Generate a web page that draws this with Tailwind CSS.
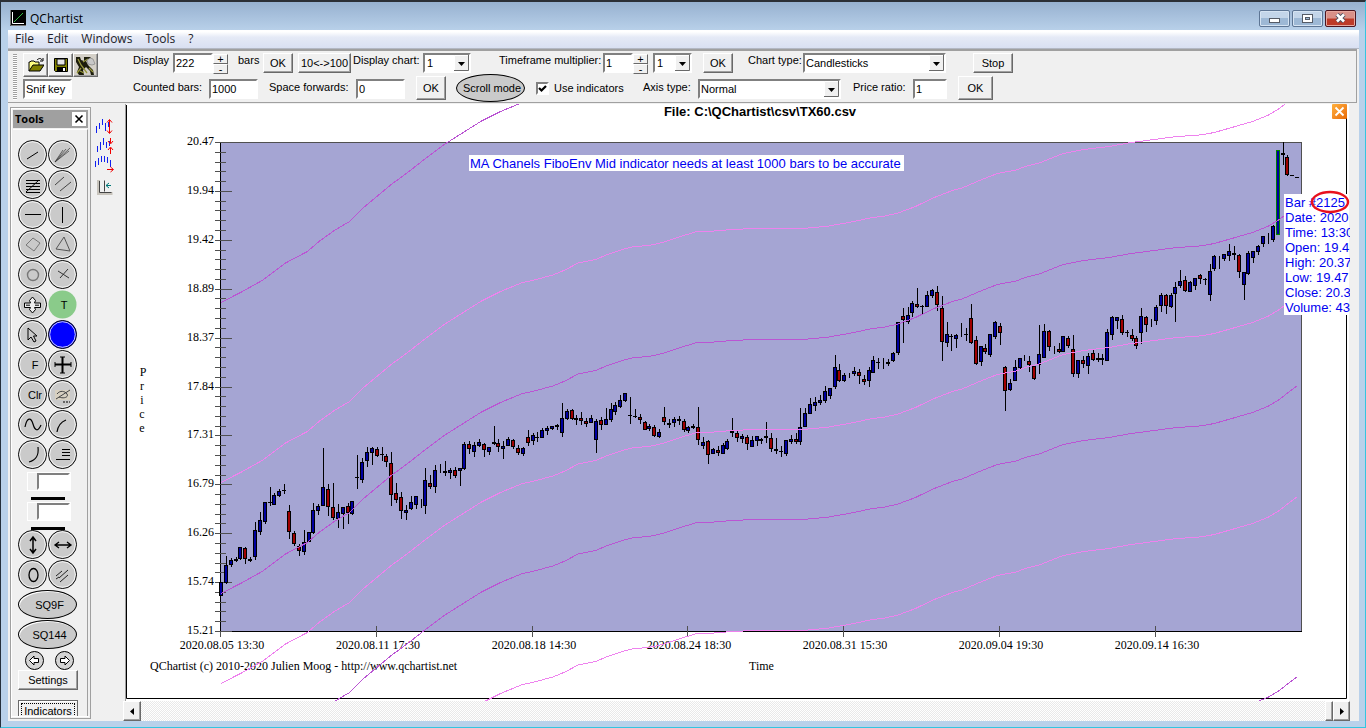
<!DOCTYPE html>
<html lang="en">
<head>
<meta charset="utf-8">
<title>QChartist</title>
<script src="https://cdn.jsdelivr.net/npm/@tailwindcss/browser@4"></script>
</head>
<body class="bg-[#b9d1ea] font-['Liberation_Sans',Arial,sans-serif] text-[11px] leading-[14px] text-black">
<div class="flex h-screen flex-col overflow-hidden border-x border-t-2 border-b border-t-[#2b2f36] border-r-[#35c5e0] border-b-[#35c5e0] border-l-[#25303c] bg-[#b9d1ea]">

  <header class="flex h-7 shrink-0 items-center bg-linear-to-b from-[#97b1d0] to-[#b8d0e9] pr-[9px] pl-[9px]">
    <svg class="mt-1 size-4" viewBox="0 0 16 16"><rect width="16" height="16" fill="#000"/><path d="M.5 0v15.500H16" stroke="#777" fill="none"/><path d="M2.500 2v11.500H14" stroke="#fff" fill="none"/><path d="M4 12 13 3" stroke="#3b4" fill="none"/></svg>
    <h1 class="mt-[6px] ml-1 font-['Open_Sans','Noto_Sans',sans-serif] text-xs">QChartist</h1>
    <div class="ml-auto flex gap-[2px] pt-1">
      <button aria-label="Minimize" class="flex h-[17px] w-[31px] items-center justify-center rounded-[2px] border border-[#5d7594] bg-linear-to-b from-[#c3d5e9] from-50% to-[#9db8d5] to-50% shadow-[inset_0_0_0_1px_#d5e3f2]"><svg class="mt-1 h-[5px] w-[11px]"><rect x=".5" y=".5" width="10" height="4" fill="#fff" stroke="#555b66"/></svg></button>
      <button aria-label="Restore" class="flex h-[17px] w-[31px] items-center justify-center rounded-[2px] border border-[#5d7594] bg-linear-to-b from-[#c3d5e9] from-50% to-[#9db8d5] to-50% shadow-[inset_0_0_0_1px_#d5e3f2]"><svg class="h-[9px] w-[11px]"><rect x=".5" y=".5" width="10" height="8" fill="#fff" stroke="#555b66"/><rect x="3.500" y="3.500" width="4" height="2" fill="#9db8d5" stroke="#555b66"/></svg></button>
      <button aria-label="Close" class="flex h-[17px] w-[31px] items-center justify-center rounded-[2px] border border-[#4c1520] bg-linear-to-b from-[#d99088] from-45% to-[#bd3a28] to-55% shadow-[inset_0_0_0_1px_#e6a79e]"><svg class="h-[10px] w-[13px]" viewBox="0 0 13 10"><path d="m3 1.500 7 7m0-7-7 7" stroke="#4a5060" stroke-width="4.500"/><path d="m3 1.500 7 7m0-7-7 7" stroke="#fff" stroke-width="2.600"/></svg></button>
    </div>
  </header>

  <div class="mr-[6px] mb-[6px] ml-[7px] flex min-h-0 flex-1 flex-col bg-[#f0f0f0]">
    <nav class="flex h-[19px] shrink-0 items-center gap-[13px] border-b border-[#b3b8c4] bg-linear-to-b from-white from-10% via-[#e5eaf6] via-40% to-[#d9e0f2] pl-[7px] font-['Open_Sans','Noto_Sans',sans-serif] text-xs text-[#1c1c28]">
      <a href="#file">File</a><a href="#edit">Edit</a><a href="#windows">Windows</a><a href="#tools">Tools</a><a href="#help">?</a>
    </nav>

    <div class="mr-[2px] flex h-[54px] shrink-0 border-t-2 border-r border-b border-t-[#a0a0a0] border-r-[#a0a0a0] border-b-[#a0a0a0]">
      <div class="mt-[3px] ml-[5px] h-[46px] w-1 bg-[repeating-linear-gradient(to_bottom,#a0a0a0_0_1px,#fff_1px_2px)]"></div>
      <div class="ml-[6px] flex w-[110px] flex-col pt-[2px]">
        <div class="flex h-6">
          <button aria-label="Open" class="flex h-6 w-[25px] items-center justify-center border border-t-white border-r-[#696969] border-b-[#696969] border-l-white shadow-[inset_-1px_-1px_#a0a0a0]"><svg class="size-4" viewBox="0 0 16 16"><path d="M1 14V5h1l1-1h3l1 1h4v3" fill="#ffff80" stroke="#000"/><path d="M1 14 5 8h11l-4 6z" fill="#808000" stroke="#000"/><path d="M9 3c2-2 4-2 5 0m1-2v3h-3" fill="none" stroke="#000"/></svg></button>
          <button aria-label="Save" class="flex h-6 w-[25px] items-center justify-center border border-t-white border-r-[#696969] border-b-[#696969] border-l-white shadow-[inset_-1px_-1px_#a0a0a0]"><svg class="size-4" viewBox="0 0 16 16"><path d="M1.500 1.500h13v13h-12l-1-1z" fill="#808000" stroke="#000"/><path d="M4 2h8v6H4z" fill="#e4e4e4" stroke="#000"/><path d="M4 10h9v5H4z" fill="#000"/><path d="M10 11h2v3h-2z" fill="#fff"/></svg></button>
          <button aria-label="Configure" class="flex h-6 w-[25px] items-center justify-center border border-t-white border-r-[#696969] border-b-[#696969] border-l-white bg-[#d4d0c8] shadow-[inset_-1px_-1px_#a0a0a0]"><svg class="h-[19px] w-[21px]" viewBox="0 0 21 19"><path d="M1 1h4l1 3 3 1V1h7l-3 3-2 1 2 4 5 5 1 5h-3l-1-4-4-4-3 3 1 5H4l-2-3 2-5-3-5z" fill="#1c1c0c"/><path d="m3 3 3 6 6 8M2 17l4-5m2-6 5-3m1 9 4 4M5 15l4 2" stroke="#98983c" stroke-width="1.300" fill="none"/><path d="m12 4 3-2 3 1 2 5-3 1-4-1z" fill="#c8c8c8" stroke="#777" stroke-width=".6"/></svg></button>
        </div>
        <input aria-label="Snif key" value="Snif key" class="mt-[2px] h-5 w-[49px] border-2 border-t-[#808080] border-r-white border-b-white border-l-[#808080] bg-white px-px text-[11px]">
      </div>

      <div class="flex flex-col pt-[2px]">
        <div class="flex h-[21px]">
          <label for="nbars" class="w-10">Display</label>
          <input id="nbars" value="222" class="h-5 w-10 border-2 border-t-[#808080] border-r-white border-b-white border-l-[#808080] bg-white px-px text-[11px]">
          <div class="mt-px flex w-[15px] flex-col"><button class="flex h-[10px] items-center justify-center border border-t-white border-r-[#696969] border-b-[#696969] border-l-white bg-[#f0f0f0] text-[11px]">+</button><button class="flex h-[10px] items-center justify-center border border-t-white border-r-[#696969] border-b-[#696969] border-l-white bg-[#f0f0f0] text-[11px]">-</button></div>
          <span class="ml-[10px] w-[25px]">bars</span>
          <button class="h-5 w-[30px] border border-t-white border-r-[#696969] border-b-[#696969] border-l-white shadow-[inset_-1px_-1px_#a0a0a0]">OK</button>
          <button class="ml-[5px] h-5 w-[53px] border border-t-white border-r-[#696969] border-b-[#696969] border-l-white whitespace-nowrap shadow-[inset_-1px_-1px_#a0a0a0]">10&lt;-&gt;100</button>
          <label for="dchart" class="ml-[2px] w-[70px] whitespace-nowrap">Display chart:</label>
          <div class="relative h-5 w-12"><select id="dchart" class="h-5 w-full appearance-none border-2 border-t-[#808080] border-r-white border-b-white border-l-[#808080] bg-white px-[2px]"><option>1</option></select><svg class="pointer-events-none absolute top-[2px] right-[2px] h-4 w-[15px]"><path d="M0 0h15v16H0z" fill="#f0f0f0"/><path d="M.5 15V.5H14" stroke="#fff" fill="none"/><path d="M14.500 0v15.500H0" stroke="#696969" fill="none"/><path d="M4 7h7l-3.500 4z"/></svg></div>
          <label for="tfm" class="ml-[28px] w-[104px] whitespace-nowrap">Timeframe multiplier:</label>
          <input id="tfm" value="1" class="h-5 w-[30px] border-2 border-t-[#808080] border-r-white border-b-white border-l-[#808080] bg-white px-px text-[11px]">
          <div class="mt-px flex w-[15px] flex-col"><button class="flex h-[10px] items-center justify-center border border-t-white border-r-[#696969] border-b-[#696969] border-l-white bg-[#f0f0f0] text-[11px]">+</button><button class="flex h-[10px] items-center justify-center border border-t-white border-r-[#696969] border-b-[#696969] border-l-white bg-[#f0f0f0] text-[11px]">-</button></div>
          <div class="relative ml-[5px] h-5 w-[39px]"><select aria-label="Timeframe" class="h-5 w-full appearance-none border-2 border-t-[#808080] border-r-white border-b-white border-l-[#808080] bg-white px-[2px]"><option>1</option></select><svg class="pointer-events-none absolute top-[2px] right-[2px] h-4 w-[15px]"><path d="M0 0h15v16H0z" fill="#f0f0f0"/><path d="M.5 15V.5H14" stroke="#fff" fill="none"/><path d="M14.500 0v15.500H0" stroke="#696969" fill="none"/><path d="M4 7h7l-3.500 4z"/></svg></div>
          <button class="ml-[11px] h-5 w-[30px] border border-t-white border-r-[#696969] border-b-[#696969] border-l-white shadow-[inset_-1px_-1px_#a0a0a0]">OK</button>
          <label for="ctype" class="ml-[15px] w-[55px] whitespace-nowrap">Chart type:</label>
          <div class="relative h-5 w-[143px]"><select id="ctype" class="h-5 w-full appearance-none border-2 border-t-[#808080] border-r-white border-b-white border-l-[#808080] bg-white px-px"><option>Candlesticks</option></select><svg class="pointer-events-none absolute top-[2px] right-[2px] h-4 w-[15px]"><path d="M0 0h15v16H0z" fill="#f0f0f0"/><path d="M.5 15V.5H14" stroke="#fff" fill="none"/><path d="M14.500 0v15.500H0" stroke="#696969" fill="none"/><path d="M4 7h7l-3.500 4z"/></svg></div>
          <button class="ml-[27px] h-5 w-10 border border-t-white border-r-[#696969] border-b-[#696969] border-l-white shadow-[inset_-1px_-1px_#a0a0a0]">Stop</button>
        </div>
        <div class="flex h-7 items-center">
          <label for="cbars" class="mb-[2px] w-[76px] whitespace-nowrap">Counted bars:</label>
          <input id="cbars" value="1000" class="mt-[2px] h-5 w-[49px] border-2 border-t-[#808080] border-r-white border-b-white border-l-[#808080] bg-white px-px text-[11px]">
          <label for="sfw" class="mb-[2px] ml-[11px] w-[87px] whitespace-nowrap">Space forwards:</label>
          <input id="sfw" value="0" class="mt-[2px] h-5 w-[49px] border-2 border-t-[#808080] border-r-white border-b-white border-l-[#808080] bg-white px-px text-[11px]">
          <button class="ml-[11px] h-6 w-[30px] border border-t-white border-r-[#696969] border-b-[#696969] border-l-white shadow-[inset_-1px_-1px_#a0a0a0]">OK</button>
          <button class="ml-[10px] h-7 w-[69px] rounded-[50%] border border-black bg-[#cacaca] pl-[3px] whitespace-nowrap">Scroll mode</button>
          <label class="ml-[11px] flex w-[107px] items-center whitespace-nowrap"><span class="relative size-[13px]"><input type="checkbox" checked class="block size-[13px] appearance-none border-2 border-t-[#808080] border-r-white border-b-white border-l-[#808080] bg-white"><svg class="pointer-events-none absolute inset-0 size-[13px]"><path d="m3 6 2.500 2.500L10 4" stroke="#000" stroke-width="2.200" fill="none"/></svg></span><span class="ml-[5px]">Use indicators</span></label>
          <label for="axis" class="mb-[2px] w-[55px] whitespace-nowrap">Axis type:</label>
          <div class="relative mt-[2px] h-5 w-[143px]"><select id="axis" class="h-5 w-full appearance-none border-2 border-t-[#808080] border-r-white border-b-white border-l-[#808080] bg-white px-px"><option>Normal</option></select><svg class="pointer-events-none absolute top-[2px] right-[2px] h-4 w-[15px]"><path d="M0 0h15v16H0z" fill="#f0f0f0"/><path d="M.5 15V.5H14" stroke="#fff" fill="none"/><path d="M14.500 0v15.500H0" stroke="#696969" fill="none"/><path d="M4 7h7l-3.500 4z"/></svg></div>
          <label for="ratio" class="mb-[2px] ml-3 w-[60px] whitespace-nowrap">Price ratio:</label>
          <input id="ratio" value="1" class="mt-[2px] h-5 w-[34px] border-2 border-t-[#808080] border-r-white border-b-white border-l-[#808080] bg-white px-px text-[11px]">
          <button class="ml-[11px] h-6 w-[35px] border border-t-white border-r-[#696969] border-b-[#696969] border-l-white shadow-[inset_-1px_-1px_#a0a0a0]">OK</button>
        </div>
      </div>
    </div>

    <div class="flex min-h-0 flex-1">
      <aside class="mt-1 mb-[2px] ml-[2px] flex w-[81px] shrink-0 flex-col overflow-hidden border border-[#a0a0a0] p-px shadow-[inset_1px_1px_#fff]">
        <div class="m-px flex h-[18px] shrink-0 items-center justify-between bg-[#a0a0a0] px-[2px]"><h2 class="font-['Open_Sans','Noto_Sans',sans-serif] text-[11px] font-bold">Tools</h2><button aria-label="Close tools" class="size-[14px] bg-white"><svg class="size-[14px]"><path d="m3.500 3.500 7 7m0-7-7 7" stroke="#000" stroke-width="1.600"/></svg></button></div>
        <div class="mx-px flex min-h-0 flex-1 flex-col overflow-hidden border-t border-r border-t-white border-r-[#a0a0a0] pt-[10px] pl-[5px]">
          <div id="tools" class="grid shrink-0 grid-cols-[30px_30px] auto-rows-[30px]"></div>
          <div class="h-[60px] shrink-0 pt-[2px]">
            <div class="mb-[2px] ml-[9px] h-7 w-[44px]"><label class="block border border-white pl-[9px]"><input aria-label="Line width" class="block h-[17px] w-full border-2 border-t-[#808080] border-r-white border-b-white border-l-[#808080] bg-white"></label><div class="mt-[6px] ml-1 h-[3px] w-[34px] bg-black"></div></div>
            <div class="ml-[9px] h-7 w-[44px]"><label class="block border border-white pl-[9px]"><input aria-label="Line style" class="block h-[17px] w-full border-2 border-t-[#808080] border-r-white border-b-white border-l-[#808080] bg-white"></label><div class="mt-[6px] ml-1 h-[3px] w-[34px] bg-black"></div></div>
          </div>
          <div id="tools2" class="grid shrink-0 grid-cols-[30px_30px] auto-rows-[30px]"></div>
          <button class="mb-px h-[29px] w-[59px] shrink-0 rounded-[50%] border border-black bg-[#cacaca] pl-1 shadow-[inset_1px_1px_#fff]">SQ9F</button>
          <button class="mb-px h-[29px] w-[59px] shrink-0 rounded-[50%] border border-black bg-[#cacaca] pl-1 shadow-[inset_1px_1px_#fff]">SQ144</button>
          <div class="flex h-5 shrink-0 gap-[11px] pl-[7px]">
            <button aria-label="Previous"><svg class="block size-[19px]"><circle cx="9.500" cy="9.500" r="9" fill="#d4d4d4" stroke="#000"/><path d="M4.500 9.500 9 5v2.500h4.500v4H9V14z" fill="#fff" stroke="#000"/></svg></button>
            <button aria-label="Next"><svg class="block size-[19px]"><circle cx="9.500" cy="9.500" r="9" fill="#d4d4d4" stroke="#000"/><path d="M14.500 9.500 10 5v2.500H5.500v4H10V14z" fill="#fff" stroke="#000"/></svg></button>
          </div>
          <button class="h-5 w-[60px] shrink-0 border border-t-white border-r-[#696969] border-b-[#696969] border-l-white shadow-[inset_-1px_-1px_#a0a0a0]">Settings</button>
          <button class="mt-[10px] h-[22px] w-[60px] shrink-0 border border-[#696969] p-[2px] shadow-[inset_1px_1px_#fff]"><span class="block h-full border border-dotted border-black leading-[14px]">Indicators</span></button>
        </div>
        <div class="h-px shrink-0 bg-white"></div>
      </aside>

      <div class="flex w-[32px] shrink-0 flex-col pt-[15px] pl-[4px]">
        <svg class="h-[80px] w-[20px]" viewBox="95 118 20 80" fill="none">
          <path d="M96.500 126v7m3-10v6m3-10v6m3-2v8m3-9v5M97.500 146v6m3-10v8m3-12v7m3-3v6m3-7v5M95.500 161v6m3-9v7m3-9v6m3-6v6m3-5v6m3-3v7" stroke="#1020f0"/>
          <path d="M109.500 120v13M107 122.500l2.500-3 2.500 3M107 130.500l2.500 3 2.500-3M110.500 138v5m-2.500-2 2.500 3 2.500-3M110.500 154v-6m-2.500 2 2.500-3 2.500 3M107 169.500h6m-2.500-2.500 3 2.500-3 2.500" stroke="#f00000"/>
          <path d="M98.500 180v13.500h14" stroke="#c8c4bc" stroke-width="3"/><path d="M99.500 181v11.500h12m-7-12v11" stroke="#444"/><path d="M111 185.500h-5m3-2.500-3 2.500 3 2.500" stroke="#077"/>
        </svg>
      </div>

      <main class="flex min-w-0 flex-1 flex-col pt-px">
        <div class="relative">
          <svg id="chart" class="block h-auto w-full bg-white" viewBox="123 104 1227 597" font-family="'Liberation Serif', serif" font-size="12">
            <defs><clipPath id="clip"><rect x="221" y="104" width="1128" height="597"/></clipPath></defs>
            <path d="M123 104h2v597h-2zM1349 104h1v597h-1z" fill="#f0f0f0"/>
            <path d="M125.500 104v597" stroke="#a0a0a0"/>
            <path d="M126.500 105v593.500H1346.500V105" stroke="#000" fill="none"/>
            <rect x="220.500" y="142.500" width="1081" height="489" fill="#a5a5d3" stroke="#505050" shape-rendering="crispEdges"/>
            <path d="M220.500 142v489.500H1302" stroke="#000" fill="none"/>
            <path id="ticks" stroke="#505050" fill="none" shape-rendering="crispEdges"/>
            <g id="labels"></g>
            <text x="760" y="116" font-family="'Liberation Sans', sans-serif" font-size="13" font-weight="bold" text-anchor="middle">File: C:\QChartist\csv\TX60.csv</text>
            <text x="150" y="670">QChartist (c) 2010-2020 Julien Moog - http://www.qchartist.net</text>
            <text x="749" y="670">Time</text>
            <g text-anchor="middle"><text x="143" y="376">P</text><text x="142" y="390">r</text><text x="142" y="404">i</text><text x="142" y="418">c</text><text x="142" y="432">e</text></g>
            <g id="candles" shape-rendering="crispEdges"></g>
            <g id="bands" clip-path="url(#clip)" fill="none" shape-rendering="crispEdges"></g>
            <g font-family="'Liberation Sans', sans-serif" font-size="13" fill="#0000f0">
              <rect x="469" y="155" width="435" height="16" fill="#fff"/>
              <text x="470" y="168">MA Chanels FiboEnv Mid indicator needs at least 1000 bars to be accurate</text>
              <path d="M1284 194h65v121h-65z" fill="#fff"/>
              <text x="1285" y="207">Bar #2125</text><text x="1285" y="222">Date: 2020</text><text x="1285" y="237">Time: 13:30</text><text x="1285" y="252">Open: 19.4</text><text x="1285" y="267">High: 20.37</text><text x="1285" y="282">Low: 19.47</text><text x="1285" y="297">Close: 20.3</text><text x="1285" y="312">Volume: 43</text>
            </g>
            <ellipse cx="1330" cy="202" rx="18" ry="10" fill="none" stroke="#e8101c" stroke-width="2.400"/>
          </svg>
          <button aria-label="Close chart" class="absolute top-0 right-[3px] size-[15px] rounded-[1px] bg-linear-to-br from-[#ffb03c] to-[#e86a00]"><svg class="size-[15px]"><path d="m3.500 3.500 8 8m0-8-8 8" stroke="#fff" stroke-width="1.800"/></svg></button>
        </div>
        <div class="flex min-h-0 flex-1 bg-[repeating-conic-gradient(#e9e9e9_0_25%,#fff_0_50%)] bg-size-[2px_2px]">
          <button aria-label="Scroll left" class="flex w-[18px] items-center justify-center border border-t-white border-r-[#696969] border-b-[#696969] border-l-white bg-[#f0f0f0] shadow-[inset_-1px_-1px_#a0a0a0]"><svg class="h-[7px] w-1"><path d="M4 0v7L0 3.500z"/></svg></button>
          <button aria-label="Scroll thumb" class="ml-auto w-2 border border-t-white border-r-[#696969] border-b-[#696969] border-l-white bg-[#f0f0f0] shadow-[inset_-1px_-1px_#a0a0a0]"></button>
          <button aria-label="Scroll right" class="flex w-[17px] items-center justify-center border border-t-white border-r-[#696969] border-b-[#696969] border-l-white bg-[#f0f0f0] shadow-[inset_-1px_-1px_#a0a0a0]"><svg class="h-[7px] w-1"><path d="M0 0v7l4-3.500z"/></svg></button>
        </div>
      </main>
      <div class="w-[9px] shrink-0"></div>
    </div>
  </div>
</div>

<script>
// Tool palette: [label, glyph markup, optional face colour]
const disc = c => `<circle cx="14.500" cy="14.500" r="14" fill="${c}" stroke="#000"/><circle cx="14.500" cy="14.500" r="12.800" fill="none" stroke="#fff" stroke-width=".8"/>`;
const txt = (s, x) => `<text x="${x}" y="19" text-anchor="middle" font-size="11" fill="#000" stroke="none">${s}</text>`;
const set1 = [
  ['Line','<path d="M9 19 20 12"/>'],
  ['Fan','<path d="M7 22 22 8M7 22 18 9M7 22 15 10M7 22l14-11" stroke="#333" stroke-width=".7"/>'],
  ['Retracement','<path d="M8 10.500h14M8 13.500h14M8 16.500h14M8 19.500h14M8 22.500h14M8 22 21 10"/>'],
  ['Parallel lines','<path d="M7 15l9-8M12 21l11-9" stroke="#444"/>'],
  ['Horizontal line','<path d="M7 14.500h16"/>'],
  ['Vertical line','<path d="M14.500 7v16"/>'],
  ['Rectangle','<path d="M15 8l7 5-6 8-8-6z" stroke="#777"/>'],
  ['Triangle','<path d="M16 7l6 14-14-2z" stroke="#555"/>'],
  ['Circle','<circle cx="15" cy="15" r="5.500" stroke="#777" stroke-width="1.400"/>'],
  ['Crossed lines','<path d="m10 11 11 7M20 9l-8 9" stroke="#333"/>'],
  ['Pan','<path d="M14.500 7 17.500 10.500 16.500 13H22.500V17.500H16.500L17.500 19.500 14.500 23 11.500 19.500 12.500 17.500H6.500V13H12.500L11.500 10.500z" fill="#eee"/><path d="M8 15.200h4m5 0h4"/>'],
  ['Text',txt('T',16),'#8acb8a'],
  ['Pointer','<path d="M10 8v12l3-3 3 5 2-1-2.500-5H19z"/>'],
  ['Colour','','#0000ff'],
  ['Fibonacci',txt('F',17)],
  ['Crosshair','<path d="M14.500 7v16M7 14.500h16" stroke-width="2"/><path d="M12 7h5m-5 16h5M7 12v5m16-5v5"/>'],
  ['Clear',txt('Clr',17)],
  ['Eraser','<path d="M7 10h15v10H7z" fill="#d8d0c0" stroke="none"/><path d="M8 19 22 10M9 14c3-4 8-3 10 0s-3 5-8 3" stroke="#444"/><path d="M15 22h7" stroke-dasharray="2 1"/>'],
  ['Sine','<path d="M7 17c2-10 6-10 8-3s5 8 8 1" stroke-width="1.200"/>'],
  ['Arc','<path d="M9 22c1-7 4-10 9-12" stroke-width="1.200"/>'],
  ['Curve','<path d="M20 7c1 9-2 13-9 15" stroke-width="1.200"/>'],
  ['Levels','<path d="M14 9.500h8M14 12.500h8M14 15.500h8M8 19.500h14"/>']
];
const set2 = [
  ['Stretch vertically','<path d="M15 8v14m-3-11 3-4 3 4m-6 8 3 4 3-4" stroke-width="1.500"/>'],
  ['Stretch horizontally','<path d="M8 15h14m-11-3-4 3 4 3m8-6 4 3-4 3" stroke-width="1.300"/>'],
  ['Ellipse','<ellipse cx="15.500" cy="15" rx="4.500" ry="6.500" stroke-width="1.300"/>'],
  ['Hatch','<path d="m8 16 6-5m-3 7 9-8M8 19l3-2m1 5 8-7" stroke="#222"/>']
];
const face = ([label, glyph, colour]) => `<button aria-label="${label}" class="block size-[29px]"><svg class="block size-[29px]" fill="none" stroke="#000">${colour === '#8acb8a' ? '<circle cx="14.500" cy="14.500" r="14" fill="#8acb8a" stroke="none"/>' : disc(colour || '#cacaca')}${glyph}</svg></button>`;
document.getElementById('tools').innerHTML = set1.map(face).join('');
document.getElementById('tools2').innerHTML = set2.map(face).join('');

// Axes
let t = '';
for (let i = 0; i <= 50; i++) { const y = Math.round(142 + i * 9.78) + .5; t += `M215 ${y}h${i % 5 ? 11 : 17}`; }
const xs = [221, 377, 533, 688, 844, 1000, 1156];
xs.forEach((x, i) => t += `M${x - .5} ${i ? 626 : 631}v${i ? 11 : 6}`);
document.getElementById('ticks').setAttribute('d', t);
const prices = ['20.47','19.94','19.42','18.89','18.37','17.84','17.31','16.79','16.26','15.74','15.21'];
const dates = ['2020.08.05 13:30','2020.08.11 17:30','2020.08.18 14:30','2020.08.24 18:30','2020.08.31 15:30','2020.09.04 19:30','2020.09.14 16:30'];
document.getElementById('labels').innerHTML =
  prices.map((p, i) => `<text x="214" y="${Math.round(145 + i * 48.9)}" text-anchor="end">${p}</text>`).join('') +
  dates.map((d, i) => `<text x="${xs[i] + 1}" y="649" text-anchor="middle">${d}</text>`).join('');

// Bars: high,low,body top,body bottom,colour (b up, r down, d flat, l range only)
const bars = `582,596,582,596,b 556,584,565,583,b 558,567,560,565,b 557,562,559,561,d 547,560,547,559,b 547,564,548,559,r 557,562,559,561,d 522,560,530,557,b 512,535,520,532,b 502,524,502,522,b 487,506,502,503,d 493,505,495,505,b 489,497,491,496,b 484,494,490,491,d 505,539,511,532,r 531,546,533,544,r 544,556,546,551,r 530,555,542,552,b 532,542,532,542,b 503,534,510,533,b 504,515,506,511,b 448,506,487,506,b 484,516,489,507,r 483,520,507,518,r 504,528,512,519,b 507,529,507,514,b 503,524,506,513,r 501,515,501,514,b 455,489,477,478,d 458,483,462,480,b 447,467,452,461,b 447,465,448,453,b 447,457,449,456,r 447,461,454,455,d 454,467,456,462,r 452,506,463,495,r 483,503,493,500,r 492,519,497,511,r 505,520,510,513,b 496,510,502,509,b 496,509,496,505,b 499,508,0,0,l 468,514,480,506,b 475,489,483,487,r 465,493,470,487,b 464,473,0,0,l 461,476,471,473,d 468,479,470,473,b 467,478,470,476,r 468,486,468,471,b 442,470,444,469,b 441,454,444,449,r 442,457,445,452,b 439,447,442,446,b 443,457,444,450,r 447,455,447,452,b 426,445,442,444,d 439,452,443,447,r 441,459,446,449,b 437,446,439,446,b 439,449,440,447,r 445,455,448,453,r 447,456,448,454,b 430,446,437,443,r 433,445,435,441,b 432,442,437,438,d 428,438,430,438,b 426,435,428,431,b 426,430,426,429,b 424,430,425,427,d 403,437,418,433,b 409,420,411,419,b 409,420,410,419,r 415,425,418,420,d 412,425,418,421,r 418,427,421,424,r 415,423,418,423,b 419,453,421,440,b 417,430,420,425,r 408,425,419,425,b 403,422,409,420,b 402,415,405,412,b 395,408,400,407,b 393,402,393,401,b 397,424,415,416,d 409,418,416,417,d 414,424,417,420,r 421,430,422,430,r 424,431,426,429,b 425,437,427,436,r 429,438,432,437,b 407,425,417,422,r 419,428,423,425,d 417,427,419,423,b 416,425,419,421,b 419,432,421,430,r 426,433,427,431,b 424,429,426,428,d 407,445,427,440,r 437,449,442,446,b 440,464,441,455,r 448,454,449,454,b 446,456,450,453,r 443,454,445,454,b 439,450,441,449,b 418,437,431,433,r 431,442,433,438,r 434,443,436,439,b 435,450,437,444,r 436,447,440,447,b 436,446,436,441,b 438,444,439,441,d 422,443,436,438,d 433,452,438,449,r 438,454,449,451,d 446,457,451,452,d 440,456,440,454,b 435,444,439,442,b 433,444,439,442,r 408,445,427,442,b 408,427,413,427,b 398,414,404,414,b 397,411,402,406,b 395,405,400,403,b 386,403,391,401,b 388,399,388,396,b 355,389,367,387,b 364,382,370,381,r 373,382,375,381,b 373,378,0,0,l 367,376,371,374,b 369,384,372,376,r 375,385,379,382,r 367,387,370,381,b 356,373,360,373,b 358,369,362,363,d 358,369,0,0,l 359,366,362,364,d 352,362,353,361,b 322,355,322,353,b 308,343,316,320,r 307,324,315,322,b 301,317,303,313,b 288,308,304,307,r 305,314,306,307,d 291,307,295,307,b 289,298,290,296,b 286,311,292,305,r 296,361,308,342,r 322,347,334,343,b 334,351,336,337,d 334,348,335,339,b 323,337,0,0,l 328,341,334,335,d 304,344,318,343,r 336,365,340,364,r 346,366,346,362,b 344,354,348,352,r 334,357,334,355,b 321,339,322,337,b 323,345,326,333,r 366,411,367,391,r 379,391,383,390,b 360,381,367,381,b 358,369,358,368,b 355,361,0,0,l 356,372,361,365,r 366,380,366,379,r 325,374,354,365,b 324,358,331,358,b 330,351,331,347,r 346,354,0,0,l 343,353,349,352,r 336,352,336,352,b 336,348,338,346,r 335,377,349,374,r 360,378,360,374,b 356,368,360,364,r 353,374,356,366,b 350,361,353,360,r 353,362,358,360,d 354,365,358,360,r 329,361,332,361,b 316,340,317,335,b 317,329,317,321,b 315,335,319,333,r 330,337,332,333,d 329,341,335,339,r 336,349,338,346,r 308,344,316,333,b 316,332,317,325,r 319,327,0,0,l 305,325,307,321,b 293,312,295,306,b 294,314,295,306,r 293,308,295,307,b 282,322,287,294,b 270,288,281,286,b 276,292,280,291,r 281,292,282,292,b 278,290,278,286,b 274,284,275,279,r 278,285,279,280,d 264,301,271,295,b 255,271,256,269,b 256,269,0,0,l 254,261,254,259,b 244,261,251,256,b 246,260,253,255,r 254,278,255,272,r 272,300,272,285,b 251,275,253,274,b 251,263,251,258,b 245,255,246,252,b 236,247,236,244,b 233,244,0,0,l 225,242,226,240,b 150,235,150,235,g 142,165,153,155,d 155,176,157,175,r 175,176,175,176,d 177,178,177,178,d`.split(' ');
document.getElementById('candles').innerHTML = bars.map((row, i) => {
  const [hi, lo, top, bot, k] = row.split(',');
  const x = Math.round(220.9 + i * 4.87), h = +hi, l = +lo, a = +top, b = +bot;
  const wick = `<rect x="${x}" y="${h}" width="1" height="${l - h}"/>`;
  if (k === 'l') return wick;
  if (k === 'd') return wick + `<rect x="${x - 2}" y="${a}" width="4" height="${b - a}"/>`;
  const fill = k === 'r' ? '#a00000' : '#0000a0';
  return wick + `<rect x="${x - 1.5}" y="${a + .5}" width="3" height="${Math.max(b - a - 1, 1)}" fill="${fill}" stroke="${k === 'g' ? '#008000' : '#000'}"/>`;
}).join('');

// Envelope bands: one moving average repeated at fixed distances
const mid = [[221,593.5],[242,582.7],[263,571],[285,554.3],[307,542.7],[320,531.7],[335,521],[350,512.3],[365,497.3],[391,475.7],[410,461.7],[427,448.3],[445,435],[460,425.5],[482,411.7],[500,402.7],[522,393.7],[533,391.3],[553,386],[565,381],[578,374],[595,370.7],[607,365.7],[623,360.3],[632,358],[650,356.3],[663,353.3],[680,347.7],[695,343],[720,341.7],[733,340.3],[760,339.5],[805,339.3],[827,337.3],[850,333.3],[870,329],[885,327],[898,324],[915,317.7],[933,309],[953,301.3],[962,299],[983,290],[998,284.3],[1015,281.3],[1027,277],[1040,273.7],[1062,264.9],[1085,260.3],[1108,257.7],[1128,254],[1160,249.7],[1175,247.7],[1203,245.7],[1215,243.3],[1237,237],[1253,232.3],[1268,226.3],[1277,221],[1283,216.7],[1290,211],[1297,206]];
document.getElementById('bands').innerHTML = [[-291,'#ba55d3'],[-111,'#ee82ee'],[0,'#ba55d3'],[90,'#ee82ee'],[180,'#ba55d3'],[291,'#ee82ee'],[471,'#ba55d3']]
  .map(([dy, c]) => `<polyline stroke="${c}" points="${mid.map(([x, y]) => x + ',' + (y + dy).toFixed(1)).join(' ')}"/>`).join('');
</script>
</body>
</html>
